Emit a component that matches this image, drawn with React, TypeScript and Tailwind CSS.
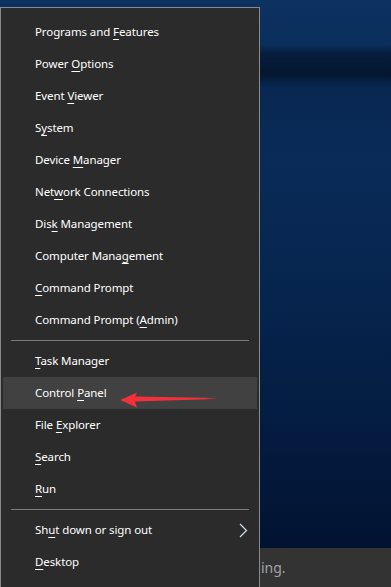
import React from "react";

type Item = { pre: string; key: string; post: string; active?: boolean; sub?: boolean };

const group1: Item[] = [
  { pre: "Programs and ", key: "F", post: "eatures" },
  { pre: "Power ", key: "O", post: "ptions" },
  { pre: "Event ", key: "V", post: "iewer" },
  { pre: "S", key: "y", post: "stem" },
  { pre: "Device ", key: "M", post: "anager" },
  { pre: "Net", key: "w", post: "ork Connections" },
  { pre: "Dis", key: "k", post: " Management" },
  { pre: "Computer Mana", key: "g", post: "ement" },
  { pre: "", key: "C", post: "ommand Prompt" },
  { pre: "Command Prompt (", key: "A", post: "dmin)" },
];

const group2: Item[] = [
  { pre: "", key: "T", post: "ask Manager" },
  { pre: "Control ", key: "P", post: "anel", active: true },
  { pre: "File ", key: "E", post: "xplorer" },
  { pre: "", key: "S", post: "earch" },
  { pre: "", key: "R", post: "un" },
];

const group3: Item[] = [
  { pre: "Sh", key: "u", post: "t down or sign out", sub: true },
  { pre: "", key: "D", post: "esktop" },
];

function Row({ item }: { item: Item }) {
  return (
    <div
      className={`relative mx-[2px] flex h-[32px] items-center pl-[32px] pr-[9px] ${
        item.active ? "bg-[#414141]" : ""
      }`}
    >
      <span className="whitespace-nowrap text-[11.5px] leading-none tracking-[-0.1px] text-white">
        {item.pre}
        <span className="underline decoration-1 underline-offset-[3px]">{item.key}</span>
        {item.post}
      </span>
      {item.sub && (
        <svg className="ml-auto" width="9" height="15" viewBox="0 0 9 15">
          <path d="M1 1 L7.5 7.5 L1 14" fill="none" stroke="#cfe0f5" strokeWidth="1.2" />
        </svg>
      )}
      {item.active && (
        <svg
          className="absolute left-[115px] top-[14px]"
          width="102"
          height="18"
          viewBox="0 0 102 18"
        >
          <defs>
            <linearGradient id="shaft" x1="0" y1="0" x2="1" y2="0">
              <stop offset="0" stopColor="#f5303a" />
              <stop offset="0.85" stopColor="#f5303a" />
              <stop offset="1" stopColor="#f5303a" stopOpacity="0.2" />
            </linearGradient>
          </defs>
          <path d="M16 5.5 L98 7 L98 8 L16 10.5 Z" fill="url(#shaft)" />
          <path d="M2 9 L19 1.5 L16 8 L19 16.5 Z" fill="#f5303a" />
        </svg>
      )}
    </div>
  );
}

function Sep() {
  return <div className="mx-[10px] my-1 h-px bg-[#7b7b7b]" />;
}

export default function App() {
  return (
    <div
      className="relative h-[587px] w-[391px] overflow-hidden bg-[linear-gradient(180deg,#0c3262_0px,#0b2f5c_44px,#061d3c_54px,#04172f_74px,#082852_88px,#0a2b58_160px,#06244d_300px,#041b3f_440px,#021331_548px)]"
      style={{ fontFamily: '"Noto Sans", "Open Sans", sans-serif' }}
    >
      <div className="absolute bottom-0 left-0 right-0 flex h-[39px] items-center bg-[#333333] pl-[261px]">
        <span className="text-[14px] text-[#a3a3a3]" style={{ fontFamily: '"Noto Sans", sans-serif' }}>
          ing.
        </span>
      </div>
      <div className="relative mt-[7px] flex h-[580px] w-[260px] flex-col border border-b-0 border-[#8a8a8a] bg-[#2b2b2b] pt-[8px]">
        {group1.map((it, i) => (
          <Row key={i} item={it} />
        ))}
        <Sep />
        {group2.map((it, i) => (
          <Row key={i} item={it} />
        ))}
        <Sep />
        {group3.map((it, i) => (
          <Row key={i} item={it} />
        ))}
      </div>
    </div>
  );
}
